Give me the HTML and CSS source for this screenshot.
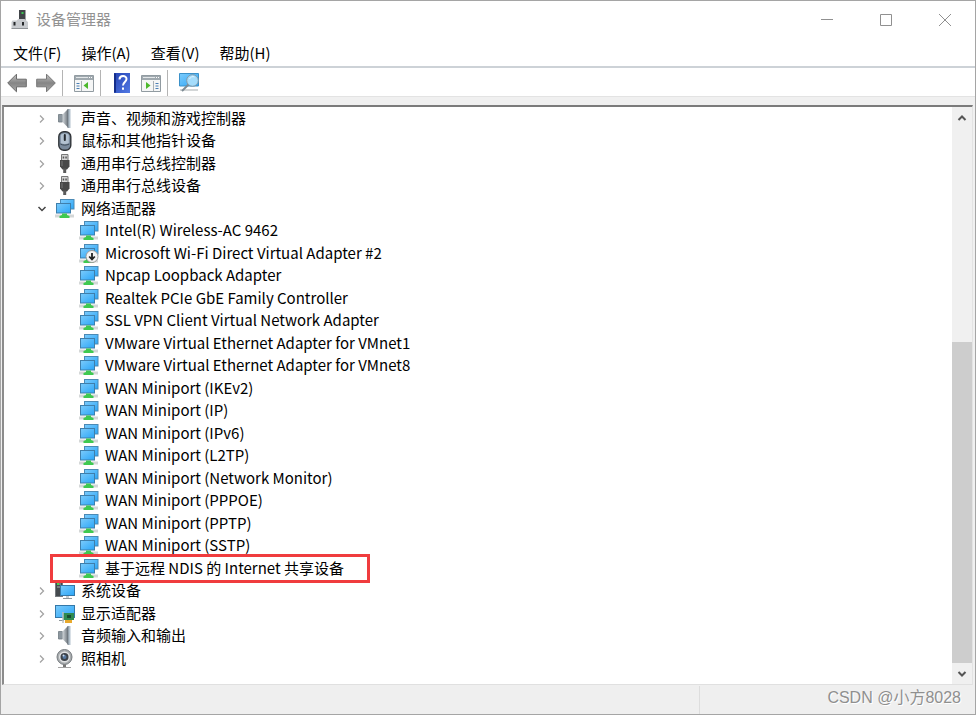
FILE: index.html
```html
<!DOCTYPE html>
<html lang="zh-CN">
<head>
  <meta charset="UTF-8" />
  <meta name="viewport" content="width=device-width, initial-scale=1.0"/>
  <title>设备管理器</title>
  <link rel="stylesheet" href="styles.css">
</head>
<body>
  <!-- Icon sprite -->
  <svg class="sprite" aria-hidden="true">
    <defs>
      <linearGradient id="screen" x1="0" y1="0" x2="1" y2="1">
        <stop offset="0" stop-color="#7ccbfb"/>
        <stop offset="1" stop-color="#2ba6f8"/>
      </linearGradient>
      <linearGradient id="metal" x1="0" y1="0" x2="1" y2="0">
        <stop offset="0" stop-color="#d3d8dc"/>
        <stop offset="1" stop-color="#6d757c"/>
      </linearGradient>
      <linearGradient id="arrow" x1="0" y1="0" x2="0" y2="1">
        <stop offset="0" stop-color="#c4c4c4"/>
        <stop offset="0.5" stop-color="#858585"/>
        <stop offset="1" stop-color="#a9a9a9"/>
      </linearGradient>
      <linearGradient id="book" x1="0" y1="0" x2="1" y2="1">
        <stop offset="0" stop-color="#2443b4"/>
        <stop offset="1" stop-color="#5279e4"/>
      </linearGradient>
    </defs>

    <symbol id="i-network" viewBox="0 0 20 20">
      <path d="M0 17h19" stroke="#d4d7d7" stroke-width="3"/>
      <rect x="5.500" y="0.500" width="13.500" height="9.500" fill="url(#screen)" stroke="#4b8ab5"/>
      <rect x="1.500" y="4.500" width="14" height="9.500" fill="url(#screen)" stroke="#3f7fab"/>
      <path d="M7 14.500h5v1.500l2.500 1v2H4.500v-2l2.500-1z" fill="#3fc951"/>
    </symbol>

    <symbol id="i-network-down" viewBox="0 0 20 20">
      <use href="#i-network"/>
      <circle cx="13" cy="12.500" r="6" fill="#f4f4f4" stroke="#9a9a9a"/>
      <path d="M13 9v6M10.200 12.500l2.800 3 2.800-3" fill="none" stroke="#222" stroke-width="1.800"/>
    </symbol>

    <symbol id="i-speaker" viewBox="0 0 20 20">
      <path d="M3.500 5.500h4v7.500h-4z" fill="#8d979f" stroke="#6f7a82" stroke-width="0.800"/>
      <path d="M7.500 5.500L13 0v18.500l-5.500-5.500z" fill="url(#metal)"/>
      <path d="M13 0h2.500v19H13z" fill="#b3c1cc"/>
      <path d="M13 0v19" stroke="#667078" stroke-width="0.800"/>
    </symbol>

    <symbol id="i-mouse" viewBox="0 0 20 20">
      <rect x="3.800" y="0.800" width="12" height="18.500" rx="5" fill="#7a8a9c" stroke="#303438" stroke-width="1.400"/>
      <path d="M5.800 4c1-2 7-2 8 0v8c-2 1.500-6 1.500-8 0z" fill="#b2c1d0"/>
      <rect x="8.800" y="3" width="2" height="7" rx="1" fill="#24292e"/>
      <path d="M5.300 13c3 1.500 6 1.500 9 0" fill="none" stroke="#3e4b59"/>
    </symbol>

    <symbol id="i-usb" viewBox="0 0 20 20">
      <path d="M6.500 0.500h6.500v6h-6.500z" fill="#d6d6d6" stroke="#777"/>
      <path d="M7.700 2.500h1.500v2h-1.500zM10.300 2.500h1.500v2h-1.500z" fill="#555"/>
      <path d="M5 6h9.500v6.500l-2.500 3H7.500L5 12.500z" fill="#484848"/>
      <path d="M7 7v5" stroke="#777"/>
      <path d="M8.200 14.500h3v4.500h-3z" fill="#5b5b5b"/>
    </symbol>

    <symbol id="i-system" viewBox="0 0 20 20">
      <rect x="0.500" y="0.500" width="7" height="15" fill="#454a4e" stroke="#767b7f"/>
      <path d="M2 3h4M2 6h4" stroke="#aab0b4"/>
      <path d="M2 3h2" stroke="#49d44e" stroke-width="2"/>
      <rect x="5.500" y="4.500" width="14" height="10" fill="url(#screen)" stroke="#3478a8"/>
      <path d="M8 17.500h9M11 16h3" stroke="#8d9599"/>
    </symbol>

    <symbol id="i-display" viewBox="0 0 20 20">
      <rect x="0.500" y="1.500" width="19" height="12" fill="url(#screen)" stroke="#3478a8"/>
      <path d="M4 16.500h5" stroke="#8d9599"/>
      <rect x="8" y="9" width="11" height="7" fill="#2d8a50"/>
      <path d="M8 8v11" stroke="#b9c0c0" stroke-width="1.500"/>
      <path d="M12 11h4v3h-4z" fill="#164c30"/>
      <path d="M10 17.500h7" stroke="#e8a92c" stroke-width="3"/>
    </symbol>

    <symbol id="i-camera" viewBox="0 0 20 20">
      <circle cx="9.500" cy="8" r="7.500" fill="#a8acae" stroke="#777c80"/>
      <circle cx="9.500" cy="8" r="5.500" fill="#e1e3e4"/>
      <circle cx="9.500" cy="8" r="4" fill="#3c4248"/>
      <circle cx="9.500" cy="8" r="2" fill="#5678a0"/>
      <circle cx="8.500" cy="6.500" r="1" fill="#c9dbee"/>
      <path d="M8 15.500h3v3H8z" fill="#777"/>
      <path d="M3 18.500h13" stroke="#a3a3a3"/>
    </symbol>

    <symbol id="i-device" viewBox="0 0 20 20">
      <path d="M9 0h6.500v11H9z" fill="#404448"/>
      <path d="M11.500 2h2v2h-2z" fill="#39c750"/>
      <path d="M2.500 10.500h4l2-1.500h6l3.500 3v6.500H1.500v-6.500z" fill="#c8cbcf"/>
      <path d="M1.500 18.500H18" stroke="#8f9397"/>
      <path d="M4.500 12v3.500M13 12v3.500" stroke="#25282b" stroke-width="2"/>
    </symbol>

    <symbol id="i-back" viewBox="0 0 20 20">
      <path d="M0.700 10L9.500 1.200v5H19.300v7.600H9.500v5z" fill="url(#arrow)" stroke="#6b6b6b" stroke-linejoin="round"/>
    </symbol>

    <symbol id="i-forward" viewBox="0 0 20 20">
      <path d="M19.300 10L10.500 1.200v5H0.700v7.600h9.800v5z" fill="url(#arrow)" stroke="#777" stroke-linejoin="round"/>
    </symbol>

    <symbol id="i-tree" viewBox="0 0 20 20">
      <path d="M0.500 2.500h19v16H0.500z" fill="#f5f6f6" stroke="#919ba1"/>
      <path d="M1 3h18v4H1z" fill="#a0a9af"/>
      <path d="M2 4.500h12" stroke="#e3e7e9"/>
      <path d="M15 4.500h1M17 4.500h1" stroke="#fff"/>
      <path d="M7.500 8v10" stroke="#a9b0b5"/>
      <path d="M2.500 10.500h3M2.500 13h3M2.500 15.500h3" stroke="#4a7fb5"/>
      <path d="M14 9v7l-4.500-3.500z" fill="#4cb82c"/>
    </symbol>

    <symbol id="i-help" viewBox="0 0 20 20">
      <path d="M2 0h16v20H2z" fill="url(#book)"/>
      <path d="M3 0.500v19" stroke="#142d8a" stroke-width="2"/>
      <path d="M7.500 6.500c0-4.500 7-4.500 7-0.500 0 3-3.500 3-3.500 6.500" fill="none" stroke="#fff" stroke-width="2"/>
      <path d="M10 14.500h2v2.200h-2z" fill="#fff"/>
    </symbol>

    <symbol id="i-pane" viewBox="0 0 20 20">
      <path d="M0.500 2.500h19v16H0.500z" fill="#f5f6f6" stroke="#919ba1"/>
      <path d="M1 3h18v4H1z" fill="#a0a9af"/>
      <path d="M2 4.500h12" stroke="#e3e7e9"/>
      <path d="M15 4.500h1M17 4.500h1" stroke="#fff"/>
      <path d="M12.500 8v10" stroke="#a9b0b5"/>
      <path d="M14.500 10.500h3M14.500 13h3M14.500 15.500h3" stroke="#4a7fb5"/>
      <path d="M5 9v7l4.500-3.500z" fill="#4cb82c"/>
    </symbol>

    <symbol id="i-scan" viewBox="0 0 20 20">
      <path d="M0.500 0.500h19v12.500H0.500z" fill="url(#screen)" stroke="#3b91c9"/>
      <path d="M1 17h18" stroke="#c4c8ca" stroke-width="1.500"/>
      <path d="M9.500 11.500L3 18" stroke="#7d8b94" stroke-width="2"/>
      <circle cx="13.500" cy="7.500" r="5.800" fill="#a4dcfb" stroke="#8499a6"/>
      <path d="M10.500 6c1-2 3-3 5-2" fill="none" stroke="#e4f6ff"/>
    </symbol>

    <symbol id="i-closed" viewBox="0 0 10 10">
      <path d="M3 1.500L6.500 5 3 8.500" fill="none" stroke="#a3a3a3" stroke-width="1.300"/>
    </symbol>

    <symbol id="i-open" viewBox="0 0 10 10">
      <path d="M1.500 3L5 6.500 8.500 3" fill="none" stroke="#454545" stroke-width="1.500"/>
    </symbol>
  </svg>

  <div class="window">
    <!-- Title bar -->
    <header class="titlebar">
      <svg class="icon"><use href="#i-device"/></svg>
      <h1>设备管理器</h1>
      <div class="window-buttons">
        <button aria-label="最小化"><svg viewBox="0 0 12 12"><path d="M0 5.500h12"/></svg></button>
        <button aria-label="最大化"><svg viewBox="0 0 12 12"><path d="M0.500 0.500h11v11H0.500z"/></svg></button>
        <button aria-label="关闭"><svg viewBox="0 0 12 12"><path d="M0 0l12 12M12 0L0 12"/></svg></button>
      </div>
    </header>

    <nav class="menu">
      <button>文件(F)</button>
      <button>操作(A)</button>
      <button>查看(V)</button>
      <button>帮助(H)</button>
    </nav>

    <div class="toolbar">
      <div class="group">
        <button aria-label="后退"><svg class="icon"><use href="#i-back"/></svg></button>
        <button aria-label="前进"><svg class="icon"><use href="#i-forward"/></svg></button>
      </div>
      <div class="group">
        <button aria-label="显示控制台树"><svg class="icon"><use href="#i-tree"/></svg></button>
      </div>
      <div class="group">
        <button aria-label="帮助"><svg class="icon"><use href="#i-help"/></svg></button>
        <button aria-label="显示操作窗格"><svg class="icon"><use href="#i-pane"/></svg></button>
      </div>
      <div class="group">
        <button aria-label="扫描检测硬件改动"><svg class="icon"><use href="#i-scan"/></svg></button>
      </div>
    </div>

    <!-- Device tree -->
    <main class="content">
      <div class="panel">
        <ul class="tree">
          <li><div class="row"><button class="toggle" aria-label="展开"><svg><use href="#i-closed"/></svg></button><svg class="icon"><use href="#i-speaker"/></svg><span>声音、视频和游戏控制器</span></div></li>
          <li><div class="row"><button class="toggle" aria-label="展开"><svg><use href="#i-closed"/></svg></button><svg class="icon"><use href="#i-mouse"/></svg><span>鼠标和其他指针设备</span></div></li>
          <li><div class="row"><button class="toggle" aria-label="展开"><svg><use href="#i-closed"/></svg></button><svg class="icon"><use href="#i-usb"/></svg><span>通用串行总线控制器</span></div></li>
          <li><div class="row"><button class="toggle" aria-label="展开"><svg><use href="#i-closed"/></svg></button><svg class="icon"><use href="#i-usb"/></svg><span>通用串行总线设备</span></div></li>
          <li>
            <div class="row"><button class="toggle" aria-label="折叠"><svg><use href="#i-open"/></svg></button><svg class="icon"><use href="#i-network"/></svg><span>网络适配器</span></div>
            <ul class="children">
              <li class="row"><svg class="icon"><use href="#i-network"/></svg><span>Intel(R) Wireless-AC 9462</span></li>
              <li class="row"><svg class="icon"><use href="#i-network-down"/></svg><span>Microsoft Wi-Fi Direct Virtual Adapter #2</span></li>
              <li class="row"><svg class="icon"><use href="#i-network"/></svg><span>Npcap Loopback Adapter</span></li>
              <li class="row"><svg class="icon"><use href="#i-network"/></svg><span>Realtek PCIe GbE Family Controller</span></li>
              <li class="row"><svg class="icon"><use href="#i-network"/></svg><span>SSL VPN Client Virtual Network Adapter</span></li>
              <li class="row"><svg class="icon"><use href="#i-network"/></svg><span>VMware Virtual Ethernet Adapter for VMnet1</span></li>
              <li class="row"><svg class="icon"><use href="#i-network"/></svg><span>VMware Virtual Ethernet Adapter for VMnet8</span></li>
              <li class="row"><svg class="icon"><use href="#i-network"/></svg><span>WAN Miniport (IKEv2)</span></li>
              <li class="row"><svg class="icon"><use href="#i-network"/></svg><span>WAN Miniport (IP)</span></li>
              <li class="row"><svg class="icon"><use href="#i-network"/></svg><span>WAN Miniport (IPv6)</span></li>
              <li class="row"><svg class="icon"><use href="#i-network"/></svg><span>WAN Miniport (L2TP)</span></li>
              <li class="row"><svg class="icon"><use href="#i-network"/></svg><span>WAN Miniport (Network Monitor)</span></li>
              <li class="row"><svg class="icon"><use href="#i-network"/></svg><span>WAN Miniport (PPPOE)</span></li>
              <li class="row"><svg class="icon"><use href="#i-network"/></svg><span>WAN Miniport (PPTP)</span></li>
              <li class="row"><svg class="icon"><use href="#i-network"/></svg><span>WAN Miniport (SSTP)</span></li>
              <li class="row marked"><svg class="icon"><use href="#i-network"/></svg><span>基于远程 NDIS 的 Internet 共享设备</span></li>
            </ul>
          </li>
          <li><div class="row"><button class="toggle" aria-label="展开"><svg><use href="#i-closed"/></svg></button><svg class="icon"><use href="#i-system"/></svg><span>系统设备</span></div></li>
          <li><div class="row"><button class="toggle" aria-label="展开"><svg><use href="#i-closed"/></svg></button><svg class="icon"><use href="#i-display"/></svg><span>显示适配器</span></div></li>
          <li><div class="row"><button class="toggle" aria-label="展开"><svg><use href="#i-closed"/></svg></button><svg class="icon"><use href="#i-speaker"/></svg><span>音频输入和输出</span></div></li>
          <li><div class="row"><button class="toggle" aria-label="展开"><svg><use href="#i-closed"/></svg></button><svg class="icon"><use href="#i-camera"/></svg><span>照相机</span></div></li>
        </ul>

        <div class="scrollbar">
          <button aria-label="向上滚动"><svg viewBox="0 0 10 10"><path d="M1.500 7L5 3.500 8.500 7"/></svg></button>
          <div class="track"><div class="thumb"></div></div>
          <button aria-label="向下滚动"><svg viewBox="0 0 10 10"><path d="M1.500 3L5 6.500 8.500 3"/></svg></button>
        </div>
      </div>
    </main>

    <footer class="statusbar">
      <div class="pane"></div>
      <div class="pane last">CSDN @小方8028</div>
    </footer>
  </div>
</body>
</html>
```

FILE: styles.css
```css
* {
  box-sizing: border-box;
  margin: 0;
  padding: 0;
}

body {
  background: #ffffff;
  color: #000000;
  font-family: "Noto Sans CJK SC", sans-serif;
  font-size: 15px;
  line-height: 22px;
}

button {
  display: flex;
  justify-content: center;
  align-items: center;
  background: none;
  border: none;
  color: inherit;
  font: inherit;
}

ul {
  list-style: none;
}

.sprite {
  position: absolute;
  width: 0;
  height: 0;
}

.icon {
  flex: none;
  width: 20px;
  height: 20px;
}

.window {
  display: flex;
  flex-direction: column;
  min-height: 100vh;
  border: 1px solid #a5a5a5;
}

/* Title bar */
.titlebar {
  display: flex;
  align-items: center;
  gap: 6px;
  height: 37px;
  padding-left: 9px;
}

.titlebar h1 {
  padding-bottom: 2px;
  color: #929292;
  font-size: 15px;
  font-weight: 400;
}

.window-buttons {
  display: flex;
  height: 100%;
  margin-left: auto;
  padding-right: 1px;
}

.window-buttons button {
  width: 59px;
}

.window-buttons svg {
  width: 12px;
  height: 12px;
  fill: none;
  stroke: #909090;
}

/* Menu and toolbar */
.menu {
  display: flex;
  gap: 20px;
  height: 30px;
  padding: 2px 0 0 12px;
  border-bottom: 2px solid #cdd2d7;
}

.toolbar {
  display: flex;
  height: 29px;
  padding: 2px 0 0 6px;
  border-bottom: 1px solid #e3e3e3;
}

.group {
  display: flex;
  gap: 9px;
  padding: 0 6px 0 11px;
}

.group:first-child {
  padding-left: 0;
}

.group + .group {
  border-left: 1px solid #b4b4b4;
}

/* Tree panel */
.content {
  display: flex;
  flex: 1;
  padding: 8px 2px 0 1px;
  background: #f0f0f0;
}

.panel {
  display: flex;
  flex: 1;
  background: #ffffff;
  border-top: 2px solid #7b7b7b;
  border-left: 2px solid #8c8c8c;
  border-right: 1px solid #e3e3e3;
  border-bottom: 1px solid #e0e0e0;
}

.tree {
  flex: 1;
  padding-left: 30px;
}

.row {
  display: flex;
  align-items: center;
  gap: 6px;
  height: 22px;
  white-space: nowrap;
}

.row span {
  padding-bottom: 2px;
}

.tree > li:nth-child(odd) > .row,
.children .row:nth-child(even) {
  height: 23px;
}

.children {
  padding-left: 45px;
}

.toggle {
  width: 15px;
}

.toggle svg {
  width: 10px;
  height: 10px;
}

.marked {
  position: relative;
}

.marked::after {
  content: "";
  box-sizing: border-box;
  position: absolute;
  top: -3px;
  left: -29px;
  width: 320px;
  height: 29px;
  border: 3px solid #f03c3e;
}

/* Scrollbar */
.scrollbar {
  display: flex;
  flex-direction: column;
  width: 20px;
  background: #f0f0f0;
}

.scrollbar button {
  height: 21px;
}

.scrollbar svg {
  width: 10px;
  height: 10px;
  fill: none;
  stroke: #555555;
  stroke-width: 2;
}

.track {
  display: flex;
  flex: 1;
  align-items: flex-end;
}

.thumb {
  width: 100%;
  height: 60%;
  background: #cdcdcd;
}

/* Status bar */
.statusbar {
  display: flex;
  height: 29px;
  padding-top: 1px;
  background: #efefef;
}

.pane {
  flex: 1;
  border-right: 1px solid #dddddd;
}

.pane.last {
  flex: none;
  width: 275px;
  padding-right: 14px;
  border-right: none;
  color: #8f8f8f;
  font-family: "Liberation Sans", "Noto Sans CJK SC", sans-serif;
  font-size: 16px;
  line-height: 24px;
  text-align: right;
  text-shadow: 1px 1px 0 #ffffff;
}
```
